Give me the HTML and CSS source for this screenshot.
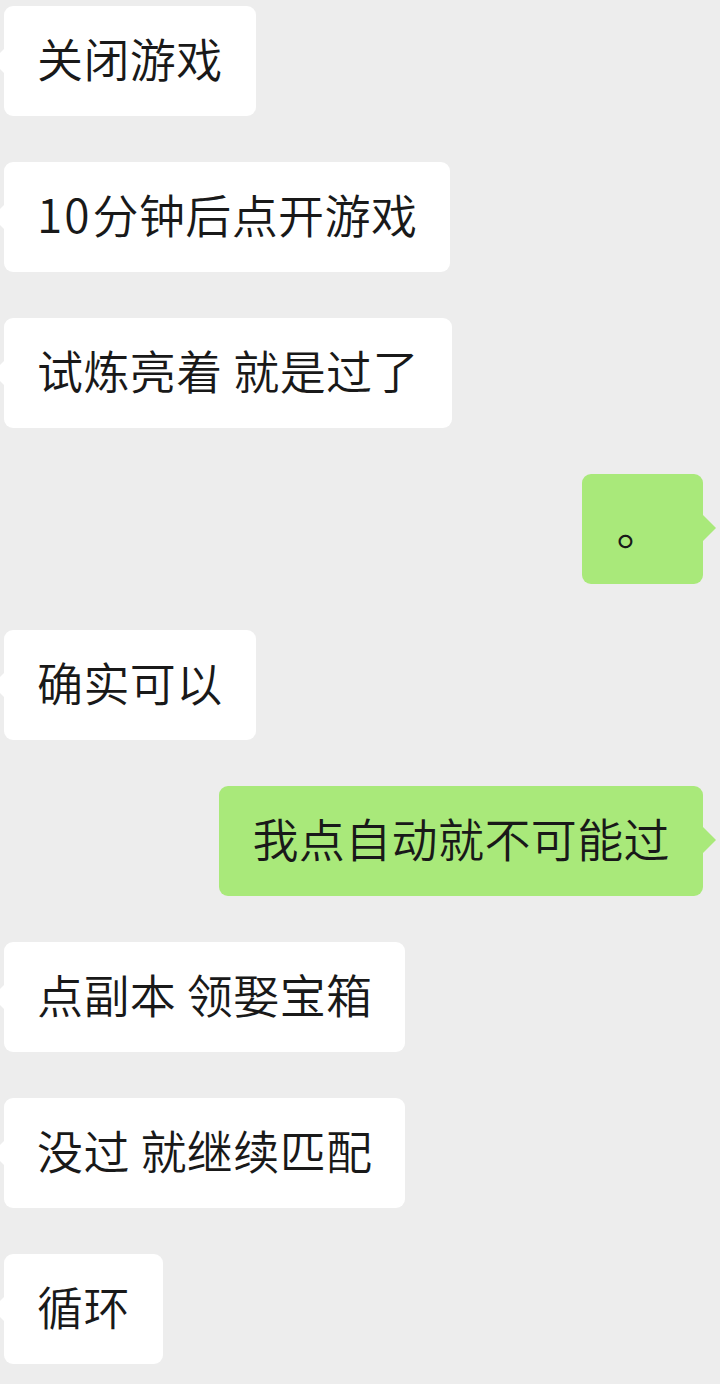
FILE: index.html
```html
<!DOCTYPE html>
<html lang="zh-CN">
<head>
    <meta charset="UTF-8">
    <meta name="viewport" content="width=device-width, initial-scale=1.0">
    <title>聊天</title>
    <link rel="stylesheet" href="styles.css">
</head>
<body>
    <div class="chat">
        <div class="msg in">关闭游戏</div>
        <div class="msg in"><span class="num">10</span>分钟后点开游戏</div>
        <div class="msg in">试炼亮着 就是过了</div>
        <div class="msg out dot">。</div>
        <div class="msg in">确实可以</div>
        <div class="msg out">我点自动就不可能过</div>
        <div class="msg in">点副本 领娶宝箱</div>
        <div class="msg in">没过 就继续匹配</div>
        <div class="msg in">循环</div>
    </div>
</body>
</html>
```

FILE: styles.css
```css
body {
    margin: 0;
    padding: 0;
    background-color: #ededed;
    font-family: "Noto Sans CJK SC", "Noto Sans", sans-serif;
    font-weight: 350;
    color: #191919;
    overflow: hidden;
}
.chat {
    display: flex;
    flex-direction: column;
    gap: 46px;
    padding-top: 6px;
}
.msg {
    position: relative;
    font-size: 46px;
    line-height: 64px;
    padding: 19px 33px 27px 33px;
    border-radius: 9px;
    white-space: nowrap;
    letter-spacing: 0.4px;
}
.msg .num {
    letter-spacing: 2px;
    margin-right: 1px;
}
.msg.in {
    align-self: flex-start;
    margin-left: 4px;
    background-color: #ffffff;
}
.msg.in::before {
    content: "";
    position: absolute;
    left: -12px;
    top: 42px;
    border: 13px solid transparent;
    border-right-color: #ffffff;
    border-left-width: 0;
}
.msg.out {
    align-self: flex-end;
    margin-right: 17px;
    background-color: #a9e97a;
}
.msg.out::after {
    content: "";
    position: absolute;
    right: -13px;
    top: 41px;
    border: 13px solid transparent;
    border-left-color: #a9e97a;
    border-right-width: 0;
}
.msg.dot {
    padding-left: 35px;
    padding-right: 40px;
}
```
